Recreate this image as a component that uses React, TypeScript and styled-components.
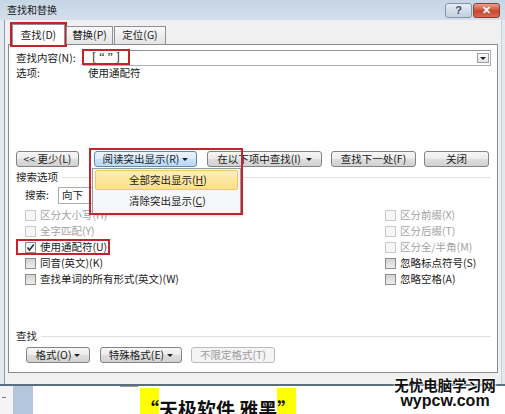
import React from "react";
import styled, { createGlobalStyle, css } from "styled-components";

const RED = "#c3232b";
const FONT = `"Noto Sans CJK SC", "Noto Sans", sans-serif`;

const GlobalStyle = createGlobalStyle`
  html, body { margin: 0; padding: 0; background: #fff; }
  body { font-family: ${FONT}; font-size: 10.5px; color: #1b1b1b; }
  * { box-sizing: border-box; }
`;

const Window = styled.div`
  position: relative;
  width: 505px;
  height: 414px;
  overflow: hidden;
  display: flex;
  flex-direction: column;
  line-height: 1;
`;

const TitleBar = styled.div`
  flex: none;
  height: 20px;
  display: flex;
  align-items: center;
  padding: 0 5px 0 7px;
  background: linear-gradient(180deg, #c6d5e5 0%, #d4dfeb 100%);
`;

const Title = styled.span`
  flex: 1;
  font-size: 10px;
  color: #202020;
`;

const CaptionButton = styled.div<{ $kind: "help" | "close" }>`
  width: 27px;
  height: 15px;
  margin-left: 1px;
  border-radius: 3px;
  display: flex;
  align-items: center;
  justify-content: center;
  font-family: "Liberation Sans", sans-serif;
  font-weight: bold;
  ${({ $kind }) =>
    $kind === "help"
      ? css`
          border: 1px solid #8496ab;
          background: linear-gradient(#e6ecf3, #c3d0df);
          color: #3d4f66;
          font-size: 11px;
        `
      : css`
          border: 1px solid #8e3d34;
          background: linear-gradient(#e7a291, #c9472f 55%, #d56a50);
          color: #fff;
          font-size: 11px;
        `}
`;

const Frame = styled.div`
  flex: none;
  height: 364px;
  background: #e3e9f0;
  padding: 0 3px 0 4px;
`;

const Inner = styled.div`
  height: 100%;
  background: #f0f0f0;
  border-left: 1px solid #8f9cab;
  border-right: 1px solid #c8cfd7;
  padding: 4px 3px 0 3px;
`;

const TabRow = styled.div`
  position: relative;
  z-index: 2;
  height: 20px;
  display: flex;
  align-items: flex-end;
  gap: 1px;
  padding-left: 4px;
`;

const Tab = styled.div<{ $active?: boolean; $w: number }>`
  width: ${({ $w }) => $w}px;
  display: flex;
  align-items: center;
  justify-content: center;
  border: 1px solid #8d9096;
  border-bottom: none;
  white-space: nowrap;
  ${({ $active }) =>
    $active
      ? css`
          height: 21px;
          margin-bottom: -1px;
          background: #fff;
          outline: 2px solid ${RED};
        `
      : css`
          height: 18px;
          background: linear-gradient(#f8f8f8, #e4e4e4);
        `}
`;

const Panel = styled.div`
  position: relative;
  z-index: 1;
  width: 490px;
  height: 329px;
  background: #fff;
  border: 1px solid #898c95;
  padding: 5px 6px 0 7px;
  display: flex;
  flex-direction: column;
`;

const Row = styled.div<{ $h: number; $mt?: number; $pl?: number }>`
  flex: none;
  height: ${({ $h }) => $h}px;
  margin-top: ${({ $mt = 0 }) => $mt}px;
  padding-left: ${({ $pl = 0 }) => $pl}px;
  display: flex;
  align-items: center;
  white-space: nowrap;
`;

const FieldLabel = styled.span<{ $w: number }>`
  flex: none;
  width: ${({ $w }) => $w}px;
`;

const TextBox = styled.div`
  flex: 1;
  height: 16px;
  border: 1px solid #abb0b7;
  border-top-color: #8e949c;
  display: flex;
  align-items: center;
  justify-content: space-between;
  padding-right: 1px;
`;

const FindValue = styled.span`
  height: 16px;
  width: 48px;
  margin-left: -2px;
  margin-top: -2px;
  border: 2px solid ${RED};
  display: flex;
  align-items: center;
  justify-content: center;
  font-family: "Liberation Serif", serif;
  font-size: 12px;
  white-space: pre;
`;

const Caret = styled.span<{ $size?: number; $ml?: number }>`
  display: inline-block;
  width: 0;
  height: 0;
  margin-left: ${({ $ml = 3 }) => $ml}px;
  border-left: ${({ $size = 3 }) => $size}px solid transparent;
  border-right: ${({ $size = 3 }) => $size}px solid transparent;
  border-top: ${({ $size = 3 }) => $size}px solid #222;
`;

const DropButton = styled.span`
  width: 12px;
  height: 10px;
  border: 1px solid #9ca2aa;
  background: linear-gradient(#fafafa, #e2e2e2);
  display: flex;
  align-items: center;
  justify-content: center;
`;

const Button = styled.div<{ $w: number; $ml?: number; $disabled?: boolean; $hot?: boolean }>`
  flex: none;
  width: ${({ $w }) => $w}px;
  height: 16px;
  margin-left: ${({ $ml = 0 }) => $ml}px;
  border: 1px solid #838383;
  border-radius: 3px;
  background: linear-gradient(#f6f6f6 0%, #ececec 50%, #dedede 51%, #d2d2d2 100%);
  display: flex;
  align-items: center;
  justify-content: center;
  white-space: nowrap;
  color: #1b1b1b;
  ${({ $disabled }) =>
    $disabled &&
    css`
      border-color: #b9bcbf;
      background: #f4f4f4;
      color: #9a9a9a;
    `}
  ${({ $hot }) =>
    $hot &&
    css`
      border-color: #5a8bb5;
      background: linear-gradient(#eaf4fc 0%, #dcecfa 50%, #c7e1f7 51%, #bcdaf4 100%);
    `}
`;

const MenuAnchor = styled.div`
  position: relative;
  margin-left: 15px;
`;

const RedBox = styled.div<{ $l: number; $t: number; $w: number; $h: number }>`
  position: absolute;
  left: ${({ $l }) => $l}px;
  top: ${({ $t }) => $t}px;
  width: ${({ $w }) => $w}px;
  height: ${({ $h }) => $h}px;
  border: 2px solid ${RED};
  pointer-events: none;
  z-index: 6;
`;

const Menu = styled.div`
  position: absolute;
  left: -2px;
  top: 17px;
  z-index: 5;
  width: 149px;
  height: 46px;
  background: #f5f6f7;
  border: 1px solid #979a9e;
  padding: 1px 2px;
  display: flex;
  flex-direction: column;
  gap: 1px;
  box-shadow: 2px 2px 2px rgba(0, 0, 0, 0.15);
`;

const MenuItem = styled.div<{ $active?: boolean }>`
  height: 20px;
  display: flex;
  align-items: center;
  padding-left: 33px;
  border: 1px solid transparent;
  border-radius: 2px;
  ${({ $active }) =>
    $active &&
    css`
      background: linear-gradient(#fdeeb3, #fbe08c);
      border-color: #e8c86a;
    `}
`;

const U = styled.span`
  text-decoration: underline;
`;

const SectionLine = styled.span`
  flex: 1;
  height: 0;
  margin-left: 4px;
  border-top: 1px solid #e1e1e1;
`;

const Select = styled.div`
  width: 100px;
  height: 17px;
  border: 1px solid #a6adb6;
  background: #fff;
  display: flex;
  align-items: center;
  padding-left: 3px;
`;

const CheckGrid = styled.div`
  flex: none;
  margin-top: 3px;
  padding-left: 9px;
  display: grid;
  grid-template-columns: 360px auto;
  grid-auto-rows: 16px;
`;

const CheckItem = styled.div<{ $disabled?: boolean }>`
  position: relative;
  display: flex;
  align-items: center;
  gap: 4px;
  white-space: nowrap;
  color: ${({ $disabled }) => ($disabled ? "#a2a2a2" : "#1b1b1b")};
`;

const Box = styled.span<{ $state: "disabled" | "off" | "on" }>`
  flex: none;
  width: 11px;
  height: 11px;
  border: 1px solid #8f8f8f;
  display: flex;
  align-items: center;
  justify-content: center;
  ${({ $state }) =>
    $state === "disabled"
      ? css`
          border-color: #c9c9c9;
          background: #f7f7f7;
        `
      : $state === "off"
      ? css`
          background: linear-gradient(#d4d4d4, #ececec);
        `
      : css`
          background: linear-gradient(#f0f0f0, #fafafa);
        `}
`;

const Doc = styled.div`
  flex: 1;
  border-top: 2px solid #5b6d80;
  display: flex;
  background: #fff;
`;

const DocMargin = styled.div`
  width: 13px;
  flex: none;
  background: #f4f4f4;
  padding-top: 11px;
  padding-left: 2px;
`;

const Dash = styled.div`
  width: 4px;
  height: 1px;
  background: #777;
`;

const Gutter = styled.div`
  width: 20px;
  flex: none;
  background: #b3c6dc;
`;

const Page = styled.div`
  position: relative;
  flex: 1;
  padding: 2px 0 0 107px;
`;

const CornerMark = styled.div`
  position: absolute;
  left: 87px;
  top: 0;
  width: 18px;
  height: 1px;
  background: #9a9a9a;
`;

const DocLine = styled.div`
  display: flex;
  font-size: 19px;
  line-height: 19px;
  font-weight: bold;
  color: #111;
  white-space: pre;
`;

const DocSpan = styled.span<{ $mark?: boolean }>`
  display: block;
  padding-top: 11px;
  ${({ $mark }) =>
    $mark &&
    css`
      background: #ffff00;
      height: 40px;
    `}
`;

const Watermark = styled.div`
  position: absolute;
  left: 391px;
  top: 376px;
  width: 108px;
  z-index: 10;
  text-align: center;
  font-weight: bold;
  color: #111;
  text-shadow: 0 0 2px #fff, 0 0 2px #fff, 0 0 3px #fff;
`;

const WmTop = styled.div`
  font-size: 14.5px;
  line-height: 17px;
`;

const WmBottom = styled.div`
  font-family: "Liberation Sans", Arial, sans-serif;
  font-size: 16px;
  line-height: 15px;
`;

const CheckMark = () => (
  <svg width="9" height="9" viewBox="0 0 9 9">
    <path d="M1.5 4.5 L3.5 7 L7.8 1.5" fill="none" stroke="#2a2a2a" strokeWidth="1.4" />
  </svg>
);

type Opt = { label: string; state: "disabled" | "off" | "on"; mark?: boolean };

const leftOpts: Opt[] = [
  { label: "区分大小写(H)", state: "disabled" },
  { label: "全字匹配(Y)", state: "disabled" },
  { label: "使用通配符(U)", state: "on", mark: true },
  { label: "同音(英文)(K)", state: "off" },
  { label: "查找单词的所有形式(英文)(W)", state: "off" },
];
const rightOpts: Opt[] = [
  { label: "区分前缀(X)", state: "disabled" },
  { label: "区分后缀(T)", state: "disabled" },
  { label: "区分全/半角(M)", state: "disabled" },
  { label: "忽略标点符号(S)", state: "off" },
  { label: "忽略空格(A)", state: "off" },
];

const Check = ({ o }: { o: Opt }) => (
  <CheckItem $disabled={o.state === "disabled"}>
    <Box $state={o.state}>{o.state === "on" && <CheckMark />}</Box>
    <span>{o.label}</span>
    {o.mark && <RedBox $l={-9} $t={0} $w={94} $h={16} />}
  </CheckItem>
);

export default function App() {
  return (
    <>
      <GlobalStyle />
      <Window>
        <TitleBar>
          <Title>查找和替换</Title>
          <CaptionButton $kind="help">?</CaptionButton>
          <CaptionButton $kind="close">✕</CaptionButton>
        </TitleBar>
        <Frame>
          <Inner>
            <TabRow>
              <Tab $active $w={53}>查找(D)</Tab>
              <Tab $w={47}>替换(P)</Tab>
              <Tab $w={52}>定位(G)</Tab>
            </TabRow>
            <Panel>
              <Row $h={16}>
                <FieldLabel $w={67}>查找内容(N):</FieldLabel>
                <TextBox>
                  <FindValue>{"[ “ ” ]"}</FindValue>
                  <DropButton>
                    <Caret $size={3} $ml={0} />
                  </DropButton>
                </TextBox>
              </Row>
              <Row $h={14}>
                <FieldLabel $w={72}>选项:</FieldLabel>
                <span>使用通配符</span>
              </Row>
              <Row $h={16} $mt={71}>
                <Button $w={63}>&lt;&lt; 更少(L)</Button>
                <MenuAnchor>
                  <Button $w={103} $hot>
                    阅读突出显示(R)
                    <Caret />
                  </Button>
                  <Menu>
                    <MenuItem $active>
                      全部突出显示(<U>H</U>)
                    </MenuItem>
                    <MenuItem>
                      清除突出显示(<U>C</U>)
                    </MenuItem>
                  </Menu>
                  <RedBox $l={-5} $t={-3} $w={154} $h={67} />
                </MenuAnchor>
                <Button $w={115} $ml={10}>
                  在以下项中查找(I)
                  <Caret $ml={5} />
                </Button>
                <Button $w={85} $ml={9}>查找下一处(F)</Button>
                <Button $w={65} $ml={8}>关闭</Button>
              </Row>
              <Row $h={14} $mt={3}>
                <span>搜索选项</span>
                <SectionLine />
              </Row>
              <Row $h={17} $mt={3} $pl={9}>
                <FieldLabel $w={33}>搜索:</FieldLabel>
                <Select>向下</Select>
              </Row>
              <CheckGrid>
                {leftOpts.map((o, i) => (
                  <React.Fragment key={o.label}>
                    <Check o={o} />
                    <Check o={rightOpts[i]} />
                  </React.Fragment>
                ))}
              </CheckGrid>
              <Row $h={14} $mt={42}>
                <span>查找</span>
                <SectionLine />
              </Row>
              <Row $h={16} $mt={4} $pl={10}>
                <Button $w={64}>
                  格式(O)
                  <Caret />
                </Button>
                <Button $w={82} $ml={10}>
                  特殊格式(E)
                  <Caret />
                </Button>
                <Button $w={84} $ml={9} $disabled>
                  不限定格式(T)
                </Button>
              </Row>
            </Panel>
          </Inner>
        </Frame>
        <Doc>
          <DocMargin>
            <Dash />
          </DocMargin>
          <Gutter />
          <Page>
            <CornerMark />
            <DocLine>
              <DocSpan $mark>“</DocSpan>
              <DocSpan>天极软件 雅黑</DocSpan>
              <DocSpan $mark>”</DocSpan>
            </DocLine>
          </Page>
        </Doc>
        <Watermark>
          <WmTop>无忧电脑学习网</WmTop>
          <WmBottom>wypcw.com</WmBottom>
        </Watermark>
      </Window>
    </>
  );
}
